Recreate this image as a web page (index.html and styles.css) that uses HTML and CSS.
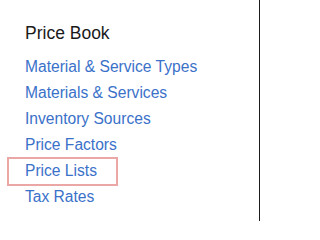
FILE: index.html
```html
<!DOCTYPE html>
<html lang="en">
<head>
<meta charset="utf-8">
<title>Price Book</title>
<link rel="stylesheet" href="styles.css">
</head>
<body>
<div class="panel">
  <h2 class="title">Price Book</h2>
  <ul class="links">
    <li><a href="#">Material &amp; Service Types</a></li>
    <li><a href="#">Materials &amp; Services</a></li>
    <li><a href="#">Inventory Sources</a></li>
    <li><a href="#">Price Factors</a></li>
    <li class="highlight"><a href="#">Price Lists</a></li>
    <li><a href="#">Tax Rates</a></li>
  </ul>
</div>
</body>
</html>
```

FILE: styles.css
```css
html, body {
  margin: 0;
  padding: 0;
  background: #ffffff;
}
.panel {
  box-sizing: border-box;
  width: 260px;
  height: 221px;
  border-right: 1px solid #1c1c1c;
  padding: 22px 0 0 25px;
  font-family: "Liberation Sans", Arial, sans-serif;
}
.title {
  margin: 0;
  font-size: 17.5px;
  line-height: 22px;
  font-weight: 400;
  color: #1a1a1a;
}
.links {
  list-style: none;
  margin: 9.5px 0 0;
  padding: 0;
}
.links li {
  font-size: 15.6px;
  line-height: 26px;
}
.links a {
  color: #3a71c9;
  text-decoration: none;
}
.highlight {
  position: relative;
}
.highlight::after {
  content: "";
  position: absolute;
  left: -18px;
  top: -1px;
  width: 111px;
  height: 29px;
  box-sizing: border-box;
  border: 2px solid #eaa7a5;
}
```
